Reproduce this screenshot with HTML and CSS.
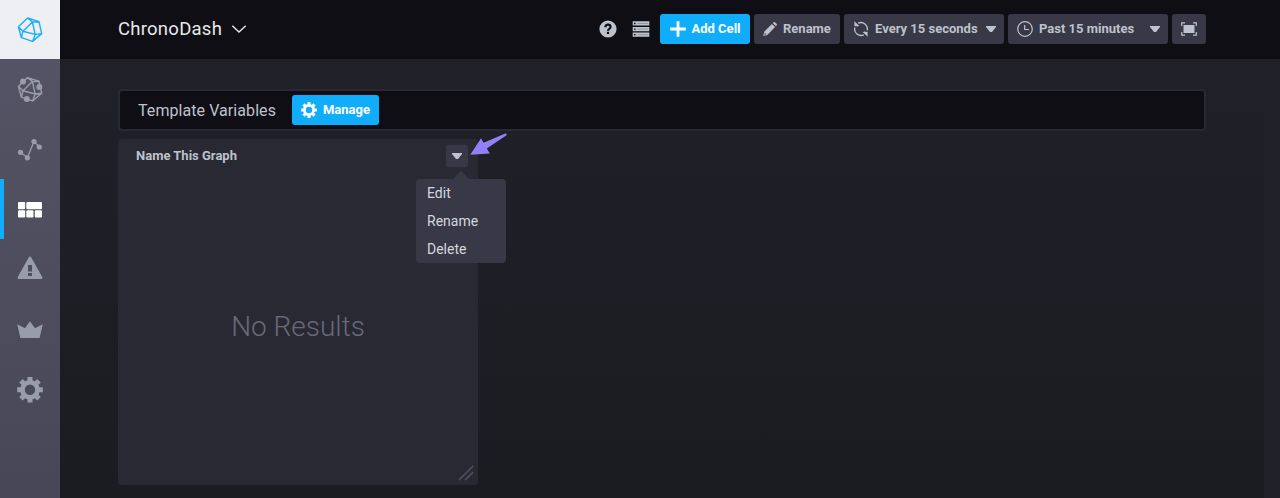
FILE: index.html
```html
<!DOCTYPE html>
<html lang="en">
<head>
<meta charset="utf-8">
<title>ChronoDash</title>
<link rel="stylesheet" href="styles.css">
</head>
<body>
<div class="app">
  <nav class="sidebar">
    <a class="nav-item nav-logo"><svg viewBox="0 0 60 60" fill="none" stroke="currentColor" stroke-width="1.4" stroke-linejoin="round"><path d="M27.6 18 39 21.7 41.7 33.6 32.6 41.4 21.4 37.7 18.4 26.8ZM27.6 18 32.4 22 39 21.7M32.4 22 23 31.2 35.2 34.4ZM18.4 26.8 23 31.2 21.4 37.7M41.7 33.6 35.2 34.4 32.6 41.4"/></svg></a>
    <a class="nav-item"><svg viewBox="0 0 60 60" fill="none" stroke="currentColor" stroke-width="1.4"><path d="M27.6 18.6 39 22.3 41.7 34.2 32.6 42 21.4 38.3 18.4 27.4ZM27.6 18.6 32.4 22.6 39 22.3M32.4 22.6 23 31.8 35.2 35ZM18.4 27.4 23 31.8 21.4 38.3M41.7 34.2 35.2 35 32.6 42"/><g fill="currentColor" stroke="none"><circle cx="23" cy="22.6" r="3"/><circle cx="39.3" cy="28" r="3"/><circle cx="26.8" cy="40" r="3"/></g></svg></a>
    <a class="nav-item"><svg viewBox="0 0 60 60" fill="currentColor"><path d="M20.5 33.3 27.4 38.8 34 22.5 39.3 28" fill="none" stroke="currentColor" stroke-width="1.3"/><circle cx="20.5" cy="33.3" r="2.6"/><circle cx="27.4" cy="38.8" r="2.6"/><circle cx="34" cy="22.5" r="2.6"/><circle cx="39.3" cy="28" r="2.6"/></svg></a>
    <a class="nav-item nav-active"><svg viewBox="0 0 60 60" fill="currentColor"><rect x="18" y="23" width="7.2" height="7.2" rx="1"/><rect x="26.3" y="23" width="15.7" height="7.2" rx="1"/><rect x="18" y="31.2" width="7.2" height="7.2" rx="1"/><rect x="26.3" y="31.2" width="7.2" height="7.2" rx="1"/><rect x="34.8" y="31.2" width="7.2" height="7.2" rx="1"/></svg></a>
    <a class="nav-item"><svg viewBox="0 0 60 60" fill="currentColor"><path fill-rule="evenodd" d="M28.7 18.6Q30 16.4 31.3 18.6L42.1 37.7Q43 40 40.7 40H19.3Q17 40 17.9 37.7ZM28 26V32.6H32V26ZM28 34V37H32V34Z"/></svg></a>
    <a class="nav-item"><svg viewBox="0 0 60 60" fill="currentColor"><path d="M17.2 25.2 25 29.2 29.9 22.3 35 29.2 42.8 25.2 39.6 39H20.4Z"/></svg></a>
    <a class="nav-item"><svg viewBox="0 0 60 60"><g transform="translate(30 30.8)"><circle r="7.5" fill="none" stroke="currentColor" stroke-width="4.6"/><path d="M0-12.8V-8M0 12.8V8M-12.8 0H-8M12.8 0H8M-9-9-6-6M9 9 6 6M-9 9-6 6M9-9 6-6" stroke="currentColor" stroke-width="5"/></g></svg></a>
  </nav>
  <div class="page">
    <header class="header">
      <h1 class="title">ChronoDash</h1>
      <svg class="title-caret" width="16" height="10" viewBox="0 0 16 10" fill="none" stroke="currentColor" stroke-width="1.4"><path d="M1.3 1.7 8 8 14.7 1.7"/></svg>
      <div class="tools">
        <svg class="help" width="18" height="18" viewBox="0 0 18 18"><circle cx="9" cy="9" r="8.6" fill="currentColor"/><path d="M6.4 7.2Q6.5 4.7 9 4.7T11.5 7Q11.5 8.1 10.2 8.9 9 9.5 9 10.8" fill="none" stroke="#0f0e15" stroke-width="2.2"/><rect x="7.9" y="11.8" width="2.2" height="2.2" fill="#0f0e15"/></svg>
        <svg class="hosts" width="18" height="18" viewBox="0 0 18 18"><path fill="currentColor" d="M.7 1.2H17.3V5.6H.7ZM.7 6.9H17.3V11.2H.7ZM.7 12.5H17.3V16.8H.7Z"/><path d="M2 3.5H3.6M2 9.1H3.6M2 14.7H3.6" stroke="#0f0e15" stroke-width="1.3"/><path d="M5.5 3.5H16M5.5 9.1H16M5.5 14.7H16" stroke="#0f0e15" stroke-width=".6" opacity=".4"/></svg>
        <button class="btn btn-primary add"><svg width="18" height="18" viewBox="0 0 18 18"><path d="M9 1.2V16.8M1.2 9H16.8" stroke="currentColor" stroke-width="2.8"/></svg><span>Add Cell</span></button>
        <button class="btn rename"><svg width="14" height="14" viewBox="0 0 14 14" fill="currentColor"><path fill-rule="evenodd" d="M8.9 1.9 12.1 5.1 4.3 12.9.2 13.9 1.2 9.8ZM1.9 10.8 1.3 12.8 3.2 12.2ZM9.7 1.1 10.7.3Q11.6-.2 12.2.4L13.6 1.8Q14.2 2.4 13.7 3.2L12.9 4.3Z"/></svg><span>Rename</span></button>
        <button class="btn every"><svg width="16" height="16" viewBox="0 0 16 16" fill="none" stroke="currentColor" stroke-width="1.3"><path d="M5.2 2.2A6.4 6.4 0 0 1 14.2 9.4M10.8 13.8A6.4 6.4 0 0 1 1.8 6.6M2.8 3.4 5.2 5.2M13.2 12.6 10.8 10.8"/><path fill="currentColor" stroke="none" d="M1.4.2 6.3 4.9 1.4 5.2ZM14.6 15.8 9.7 11.1 14.6 10.8Z"/></svg><span>Every 15 seconds</span><i class="caret"></i></button>
        <button class="btn past"><svg width="16" height="16" viewBox="0 0 16 16" fill="none" stroke="currentColor" stroke-width="1.2"><circle cx="8" cy="8" r="7.3"/><path d="M7.7 4V8.5H12"/></svg><span>Past 15 minutes</span><i class="caret"></i></button>
        <button class="btn full"><svg width="16" height="14" viewBox="0 0 16 14"><rect x="2.5" y="3" width="11" height="8" fill="currentColor"/><path d="M4 .9H.7V4M12 .9H15.3V4M4 13.1H.7V10M12 13.1H15.3V10" fill="none" stroke="currentColor" stroke-width="1.2"/></svg></button>
      </div>
    </header>
    <main class="content">
      <section class="variables">
        <h2 class="variables-title">Template Variables</h2>
        <button class="btn btn-primary manage"><svg width="16" height="16" viewBox="-13 -13 26 26"><circle r="7.5" fill="none" stroke="currentColor" stroke-width="4.6"/><path d="M0-12.8V-8M0 12.8V8M-12.8 0H-8M12.8 0H8M-9-9-6-6M9 9 6 6M-9 9-6 6M9-9 6-6" stroke="currentColor" stroke-width="5"/></svg><span>Manage</span></button>
      </section>
      <section class="cell">
        <div class="cell-head"><h3 class="cell-name">Name This Graph</h3><button class="cell-toggle"><i class="caret"></i></button></div>
        <p class="empty">No Results</p>
        <svg class="grip" width="16" height="16" viewBox="0 0 16 16" stroke="currentColor" stroke-width="1.8"><path d="M.8 15.2 15.2.8M7 15.2 15.2 7"/></svg>
        <ul class="menu"><li>Edit</li><li>Rename</li><li>Delete</li></ul>
        <svg class="arrow" width="40" height="26" viewBox="0 0 40 26"><path d="M1.3 21.7 12 5.3 14.6 9.8 36.2.4Q38.6.3 37.2 2.4L17.8 15.4 20.8 20.4Z" fill="#9181f8"/></svg>
      </section>
    </main>
  </div>
</div>
</body>
</html>
```
FILE: styles.css
```css
* { box-sizing: border-box; }
body { margin: 0; font-family: Roboto, sans-serif; background: #202028; overflow: hidden; }
h1, h2, h3, p, ul { margin: 0; padding: 0; font-weight: 400; }
button { font: inherit; border: 0; padding: 0; }
svg { display: block; flex: none; }
.app { display: flex; height: 498px; }
.sidebar { width: 60px; flex: none; background: linear-gradient(#555567, #474757); color: #999dab; }
.nav-item { display: block; height: 60px; }
.nav-item svg { width: 60px; height: 60px; }
.nav-logo { background: #eeeff2; color: #1baef8; height: 59px; }
.nav-active { color: #fff; box-shadow: inset 4px 0 #10adfc; }
.page { flex: 1; display: flex; flex-direction: column; }
.header { height: 59px; background: #0f0e15; padding: 0 74px 1px 58px; display: flex; align-items: center; color: #e7e8eb; }
.title { font-size: 18.5px; line-height: 22px; letter-spacing: 0.25px; }
.title-caret { margin-left: 9px; }
.tools { margin-left: auto; display: flex; align-items: center; gap: 4px; color: #bec2cc; }
.help { margin-right: 11px; }
.hosts { margin-right: 6.4px; }
.btn { height: 30px; border-radius: 3px; background: #383846; color: #bec2cc; display: flex; align-items: center; font-size: 13px; font-weight: 700; white-space: nowrap; }
.btn span { position: relative; top: -0.5px; }
.btn-primary { background: #10adfc; color: #fff; }
.add { width: 90px; padding-left: 8.5px; gap: 5px; }
.rename { width: 86px; padding-left: 9px; gap: 6px; }
.every { width: 160px; padding: 0 8px 0 9px; gap: 6px; }
.past { width: 160px; padding: 0 8px 0 9px; gap: 6px; }
.full { width: 34px; justify-content: center; }
.caret { width: 10px; height: 6px; margin-left: auto; background: currentColor; clip-path: polygon(0 0, 100% 0, 100% 17%, 60% 100%, 40% 100%, 0 17%); }
.content { flex: 1; margin-right: 16px; padding: 30px 58px 0; background: linear-gradient(#202028, #1b1b22); }
.variables { height: 42px; border: 2px solid #292933; border-radius: 4px; background: #0f0e15; display: flex; align-items: center; padding-left: 18px; gap: 16px; color: #bec2cc; }
.variables-title { font-size: 16px; line-height: 18px; padding-top: 2px; letter-spacing: 0.07px; }
.manage { width: 87px; padding-left: 9px; gap: 6px; }
.cell { position: relative; width: 360px; height: 346px; margin-top: 8px; border-radius: 4px; background: #292933; color: #bec2cc; }
.cell-head { display: flex; align-items: center; justify-content: space-between; height: 34px; padding: 0 10px 0 18px; }
.cell-name { font-size: 13px; font-weight: 700; padding-bottom: 2px; }
.cell-toggle { width: 22px; height: 22px; border-radius: 3px; background: #383846; color: #bec2cc; display: flex; align-items: center; justify-content: center; }
.cell-toggle .caret { margin: 0; }
.empty { display: flex; align-items: center; justify-content: center; height: 307px; font-size: 28px; font-weight: 300; color: #676978; }
.grip { position: absolute; right: 4px; bottom: 4px; color: #4b4b5b; }
.menu { position: absolute; left: 298px; top: 40px; width: 90px; height: 84px; border-radius: 4px; background: #383846; list-style: none; font-size: 14px; line-height: 28px; color: #d4d7dd; }
.menu::before { content: ""; position: absolute; left: 37px; top: -8px; border: 8px solid transparent; border-top: 0; border-bottom-color: #383846; }
.menu li { padding-left: 11px; }
.arrow { position: absolute; left: 351px; top: -6px; }
```
